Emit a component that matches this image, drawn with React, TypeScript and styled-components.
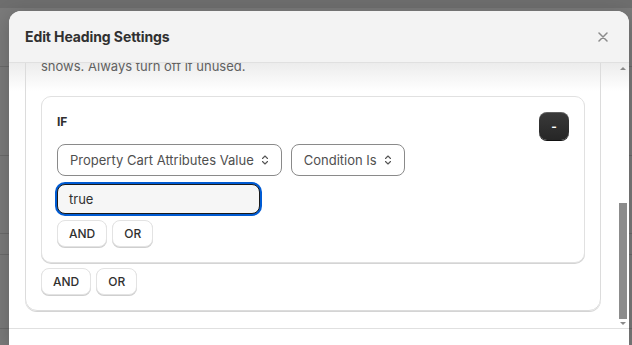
import React from "react";
import styled, { createGlobalStyle } from "styled-components";

const Global = createGlobalStyle`
  html, body { margin: 0; padding: 0; }
  body {
    width: 632px;
    height: 345px;
    overflow: hidden;
    font-family: Inter, "Noto Sans", sans-serif;
    background:
      linear-gradient(#6e6e6e, #6e6e6e) 0 0 / 100% 8px no-repeat,
      linear-gradient(#6a6a6a, #6a6a6a) 0 66px / 100% 1px no-repeat,
      linear-gradient(#6a6a6a, #6a6a6a) 0 155px / 100% 1px no-repeat,
      linear-gradient(#6a6a6a, #6a6a6a) 0 233px / 100% 1px no-repeat,
      linear-gradient(#6a6a6a, #6a6a6a) 0 254px / 100% 1px no-repeat,
      linear-gradient(#6a6a6a, #6a6a6a) 0 328px / 100% 1px no-repeat,
      #7a7a7a;
  }
`;

const Page = styled.div`
  padding: 11px 3px 0 9px;
  height: 345px;
  box-sizing: border-box;
`;

const Modal = styled.div`
  display: flex;
  flex-direction: column;
  background: #fff;
  border-radius: 12px 12px 0 0;
  overflow: hidden;
  height: 334px;
  box-shadow: 0 4px 20px rgba(0, 0, 0, 0.2);
`;

const Header = styled.div`
  display: flex;
  align-items: center;
  justify-content: space-between;
  height: 52px;
  flex: none;
  padding: 0 16px;
  background: #f3f3f3;
  border-bottom: 1px solid #e0e0e0;
  box-sizing: border-box;
  position: relative;
  z-index: 1;
`;

const Title = styled.h2`
  margin: 0;
  font-size: 14px;
  font-weight: 650;
  color: #303030;
  letter-spacing: -0.1px;
`;

const CloseButton = styled.button`
  display: flex;
  align-items: center;
  justify-content: center;
  width: 28px;
  height: 28px;
  margin-right: -4px;
  border: none;
  background: transparent;
  padding: 0;
  color: #8a8a8a;
`;

const Body = styled.div`
  display: flex;
  height: 265px;
  flex: none;
  background: linear-gradient(#ececec, #ffffff 28px);
`;

const ScrollContent = styled.div`
  flex: 1;
  overflow: hidden;
  padding: 0 17px 0 16px;
`;

const OuterCard = styled.div`
  margin-top: -23px;
  border: 1px solid #dcdcdc;
  border-radius: 12px;
  padding: 15px;
  box-shadow: 0 1px 0 #d4d4d4;
  display: flex;
  flex-direction: column;
`;

const Description = styled.p`
  margin: 0 0 20px;
  font-size: 13px;
  line-height: 20px;
  color: #616161;
`;

const InnerCard = styled.div`
  border: 1px solid #e1e1e1;
  border-radius: 10px;
  padding: 15px;
  box-shadow: 0 1px 0 #d4d4d4;
  display: flex;
  flex-direction: column;
  background: #fff;
`;

const CondHeader = styled.div`
  display: flex;
  justify-content: space-between;
  align-items: flex-start;
`;

const IfLabel = styled.span`
  font-size: 12px;
  font-weight: 650;
  line-height: 20px;
  color: #303030;
`;

const RemoveButton = styled.button`
  width: 30px;
  height: 28px;
  border: none;
  border-radius: 8px;
  background: linear-gradient(#3a3a3a, #262626);
  box-shadow: inset 0 1px 0 rgba(255, 255, 255, 0.2), 0 1px 0 #111;
  color: #fff;
  font-family: Inter, sans-serif;
  font-size: 12px;
  font-weight: 700;
  padding: 0;
`;

const SelectRow = styled.div`
  display: flex;
  gap: 9px;
  margin-top: 4px;
`;

const Select = styled.div`
  display: inline-flex;
  align-items: center;
  gap: 5px;
  height: 32px;
  box-sizing: border-box;
  padding: 0 10px 0 12px;
  border: 1px solid #8a8a8a;
  border-radius: 8px;
  font-size: 13px;
  color: #4f4f4f;
  white-space: nowrap;
`;

const ValueInput = styled.div`
  width: 203px;
  height: 30px;
  margin-top: 8px;
  box-sizing: border-box;
  display: flex;
  align-items: center;
  padding: 0 11px;
  border: 1px solid #1a1a1a;
  border-radius: 8px;
  background: #f6f6f6;
  box-shadow: 0 0 0 2px #005bd3;
  font-size: 13px;
  color: #303030;
`;

const ButtonRow = styled.div<{ $top: number }>`
  display: flex;
  gap: 5px;
  margin-top: ${(p) => p.$top}px;
`;

const LogicButton = styled.button`
  height: 27px;
  padding: 0 11px;
  border: 1px solid #e3e3e3;
  border-radius: 8px;
  background: #fff;
  box-shadow: 0 1px 0 #cfcfcf;
  font-family: Inter, sans-serif;
  font-size: 12px;
  font-weight: 450;
  color: #303030;
`;

const Scrollbar = styled.div`
  width: 10px;
  margin-right: 1px;
  display: flex;
  flex-direction: column;
  align-items: center;
  padding: 4px 0 3px;
  box-sizing: border-box;
`;

const Arrow = styled.div<{ $down?: boolean }>`
  width: 0;
  height: 0;
  border-left: 3px solid transparent;
  border-right: 3px solid transparent;
  ${(p) =>
    p.$down
      ? "border-top: 3px solid #8a8a8a;"
      : "border-bottom: 3px solid #8a8a8a;"}
`;

const Track = styled.div`
  flex: 1;
  width: 100%;
  display: flex;
  flex-direction: column;
  justify-content: flex-end;
  padding: 3px 1px;
  box-sizing: border-box;
`;

const Thumb = styled.div`
  height: 116px;
  background: #8c8c8c;
`;

const Footer = styled.div`
  flex: 1;
  border-top: 1px solid #e0e0e0;
  background: #fff;
`;

const Chevrons = () => (
  <svg width="12" height="12" viewBox="0 0 12 12" fill="none" stroke="#555" strokeWidth="1.1" strokeLinecap="round" strokeLinejoin="round">
    <path d="M3.5 4.5 6 2l2.5 2.5" />
    <path d="M3.5 7.5 6 10l2.5-2.5" />
  </svg>
);

const CloseIcon = () => (
  <svg width="10" height="10" viewBox="0 0 10 10" stroke="currentColor" strokeWidth="1.5" strokeLinecap="round">
    <path d="M1 1l8 8M9 1 1 9" />
  </svg>
);

export default function App() {
  return (
    <>
      <Global />
      <Page>
        <Modal>
          <Header>
            <Title>Edit Heading Settings</Title>
            <CloseButton aria-label="Close">
              <CloseIcon />
            </CloseButton>
          </Header>
          <Body>
            <ScrollContent>
              <OuterCard>
                <Description>shows. Always turn off if unused.</Description>
                <InnerCard>
                  <CondHeader>
                    <IfLabel>IF</IfLabel>
                    <RemoveButton>-</RemoveButton>
                  </CondHeader>
                  <SelectRow>
                    <Select>
                      Property Cart Attributes Value <Chevrons />
                    </Select>
                    <Select>
                      Condition Is <Chevrons />
                    </Select>
                  </SelectRow>
                  <ValueInput>true</ValueInput>
                  <ButtonRow $top={6}>
                    <LogicButton>AND</LogicButton>
                    <LogicButton>OR</LogicButton>
                  </ButtonRow>
                </InnerCard>
                <ButtonRow $top={5}>
                  <LogicButton>AND</LogicButton>
                  <LogicButton>OR</LogicButton>
                </ButtonRow>
              </OuterCard>
            </ScrollContent>
            <Scrollbar>
              <Arrow />
              <Track>
                <Thumb />
              </Track>
              <Arrow $down />
            </Scrollbar>
          </Body>
          <Footer />
        </Modal>
      </Page>
    </>
  );
}
